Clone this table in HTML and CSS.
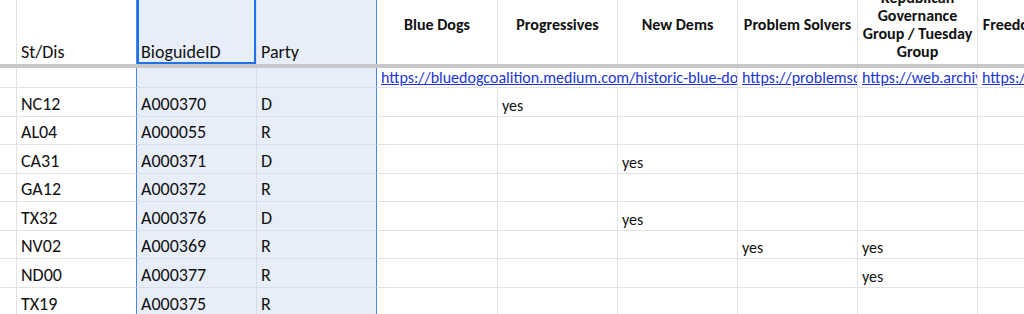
FILE: index.html
```html
<!DOCTYPE html>
<html>
<head>
<meta charset="utf-8">
<link rel="stylesheet" href="styles.css">
</head>
<body>
<div class="sheet">
  <div class="row head">
    <div class="cell"></div>
    <div class="cell big edge-right-blue">St/Dis</div>
    <div class="cell big sel active">BioguideID</div>
    <div class="cell big sel edge-right-blue">Party</div>
    <div class="cell th">Blue Dogs</div>
    <div class="cell th">Progressives</div>
    <div class="cell th">New Dems</div>
    <div class="cell th">Problem Solvers</div>
    <div class="cell th">Republican Governance Group / Tuesday Group</div>
    <div class="cell th">Freedom Caucus</div>
  </div>
  <div class="freeze"></div>
  <div class="row links">
    <div class="cell"></div>
    <div class="cell edge-right-blue"></div>
    <div class="cell sel"></div>
    <div class="cell sel edge-right-blue"></div>
    <div class="cell sm span3"><a href="#">https://bluedogcoalition.medium.com/historic-blue-dog-coalition-members</a></div>
    <div class="cell sm"><a href="#">https://problemsolverscaucus.house.gov/caucus-members</a></div>
    <div class="cell sm"><a href="#">https://web.archive.org/web/2020/https://tuesdaygroup.house.gov</a></div>
    <div class="cell sm"><a href="#">https://freedomcaucus.house.gov/members</a></div>
  </div>
  <div class="row r29">
    <div class="cell"></div><div class="cell big edge-right-blue">NC12</div><div class="cell big sel">A000370</div><div class="cell big sel edge-right-blue">D</div>
    <div class="cell sm"></div><div class="cell sm">yes</div><div class="cell sm"></div><div class="cell sm"></div><div class="cell sm"></div><div class="cell sm"></div>
  </div>
  <div class="row r28">
    <div class="cell"></div><div class="cell big edge-right-blue">AL04</div><div class="cell big sel">A000055</div><div class="cell big sel edge-right-blue">R</div>
    <div class="cell sm"></div><div class="cell sm"></div><div class="cell sm"></div><div class="cell sm"></div><div class="cell sm"></div><div class="cell sm"></div>
  </div>
  <div class="row r29">
    <div class="cell"></div><div class="cell big edge-right-blue">CA31</div><div class="cell big sel">A000371</div><div class="cell big sel edge-right-blue">D</div>
    <div class="cell sm"></div><div class="cell sm"></div><div class="cell sm">yes</div><div class="cell sm"></div><div class="cell sm"></div><div class="cell sm"></div>
  </div>
  <div class="row r28">
    <div class="cell"></div><div class="cell big edge-right-blue">GA12</div><div class="cell big sel">A000372</div><div class="cell big sel edge-right-blue">R</div>
    <div class="cell sm"></div><div class="cell sm"></div><div class="cell sm"></div><div class="cell sm"></div><div class="cell sm"></div><div class="cell sm"></div>
  </div>
  <div class="row r29">
    <div class="cell"></div><div class="cell big edge-right-blue">TX32</div><div class="cell big sel">A000376</div><div class="cell big sel edge-right-blue">D</div>
    <div class="cell sm"></div><div class="cell sm"></div><div class="cell sm">yes</div><div class="cell sm"></div><div class="cell sm"></div><div class="cell sm"></div>
  </div>
  <div class="row r28">
    <div class="cell"></div><div class="cell big edge-right-blue">NV02</div><div class="cell big sel">A000369</div><div class="cell big sel edge-right-blue">R</div>
    <div class="cell sm"></div><div class="cell sm"></div><div class="cell sm"></div><div class="cell sm">yes</div><div class="cell sm">yes</div><div class="cell sm"></div>
  </div>
  <div class="row r29">
    <div class="cell"></div><div class="cell big edge-right-blue">ND00</div><div class="cell big sel">A000377</div><div class="cell big sel edge-right-blue">R</div>
    <div class="cell sm"></div><div class="cell sm"></div><div class="cell sm"></div><div class="cell sm"></div><div class="cell sm">yes</div><div class="cell sm"></div>
  </div>
  <div class="row r29">
    <div class="cell"></div><div class="cell big edge-right-blue">TX19</div><div class="cell big sel">A000375</div><div class="cell big sel edge-right-blue">R</div>
    <div class="cell sm"></div><div class="cell sm"></div><div class="cell sm"></div><div class="cell sm"></div><div class="cell sm"></div><div class="cell sm"></div>
  </div>
</div>
</body>
</html>
```
FILE: styles.css
```css
html, body {
  margin: 0;
  padding: 0;
  background: #ffffff;
  overflow: hidden;
}
body {
  font-family: Carlito, "Liberation Sans", sans-serif;
  color: #111111;
}
.sheet {
  width: 1100px;
  margin-top: -16px;
}
.row {
  display: grid;
  grid-template-columns: 17px 120px 120px 120px 121px 120px 120px 120px 120px 120px;
}
.cell {
  border-right: 1px solid #e2e2e2;
  border-bottom: 1px solid #e2e2e2;
  overflow: hidden;
  white-space: nowrap;
  padding: 0 4px 1px 4px;
  display: flex;
  align-items: flex-end;
  min-width: 0;
}
.big {
  font-size: 18px;
  line-height: 22px;
}
.sm {
  font-size: 16px;
  line-height: 20px;
}
.sm.cell {
  padding-bottom: 0;
}
.sel {
  background: #e8eef9;
}
.sel {
  border-right-color: #d9dfea;
  border-bottom-color: #d9dfea;
}
.edge-right-blue,
.sel.edge-right-blue {
  border-right-color: #4a86e8;
}
.head {
  height: 80px;
}
.head .cell {
  border-bottom: none;
  padding-bottom: 1px;
}
.head .active {
  box-shadow: inset 0 0 0 2px #1a73e8;
}
.head .th {
  font-size: 16px;
  font-weight: bold;
  line-height: 18px;
  white-space: normal;
  text-align: center;
  justify-content: center;
  align-items: center;
  padding: 2px 4px 0 4px;
}
.freeze {
  height: 4px;
  background: #c8c8c8;
}
.links {
  height: 20px;
}
.links .cell {
  padding-bottom: 0;
}
.links a {
  color: #1b35d6;
  text-decoration: underline;
  font-size: 16px;
  line-height: 19px;
}
.span3 {
  grid-column: span 3;
}
.r29 { height: 29px; }
.r28 { height: 28px; }
```
